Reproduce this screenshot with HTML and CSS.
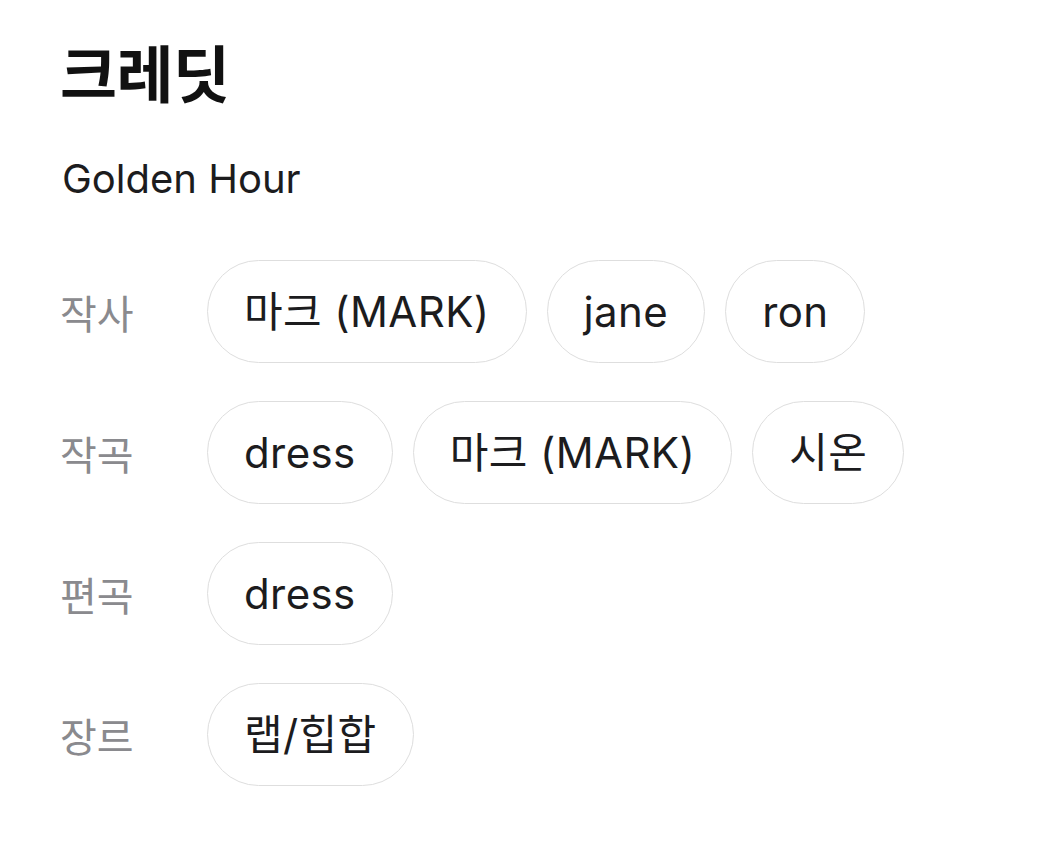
FILE: index.html
```html
<!DOCTYPE html>
<html lang="ko">
<head>
<meta charset="utf-8">
<title>크레딧</title>
<link rel="stylesheet" href="styles.css">
</head>
<body>
<main class="credits">
  <h1 class="title">크레딧</h1>
  <p class="song">Golden Hour</p>
  <div class="grid">
    <div class="label">작사</div>
    <div class="chips">
      <span class="chip">마크 (MARK)</span>
      <span class="chip">jane</span>
      <span class="chip">ron</span>
    </div>
    <div class="label">작곡</div>
    <div class="chips">
      <span class="chip">dress</span>
      <span class="chip">마크 (MARK)</span>
      <span class="chip">시온</span>
    </div>
    <div class="label">편곡</div>
    <div class="chips">
      <span class="chip">dress</span>
    </div>
    <div class="label">장르</div>
    <div class="chips">
      <span class="chip">랩/힙합</span>
    </div>
  </div>
</main>
</body>
</html>
```
FILE: styles.css
```css
html, body {
  margin: 0;
  padding: 0;
  background: #ffffff;
}
body {
  font-family: "Inter", "Noto Sans CJK KR", sans-serif;
  color: #1c1c1e;
}
.credits {
  padding: 28px 60px 0 60px;
}
.title {
  margin: 0;
  font-family: "Noto Sans CJK KR", sans-serif;
  font-weight: 700;
  font-size: 62px;
  line-height: 86px;
  color: #111111;
  letter-spacing: -0.5px;
}
.song {
  margin: 41px 0 0 2px;
  font-size: 40px;
  line-height: 48px;
  color: #1c1c1e;
}
.grid {
  margin-top: 57px;
  display: grid;
  grid-template-columns: 147px auto;
  row-gap: 38px;
  align-items: center;
}
.label {
  font-family: "Noto Sans CJK KR", sans-serif;
  font-size: 40px;
  line-height: 48px;
  color: #8a8a8e;
}
.chips {
  display: flex;
  gap: 20px;
}
.chip {
  box-sizing: border-box;
  display: inline-flex;
  align-items: center;
  height: 103px;
  padding: 0 36px;
  border: 1.5px solid #dedede;
  border-radius: 52px;
  font-size: 42px;
  line-height: 50px;
  letter-spacing: 0.4px;
  color: #1c1c1e;
  white-space: nowrap;
}
```
